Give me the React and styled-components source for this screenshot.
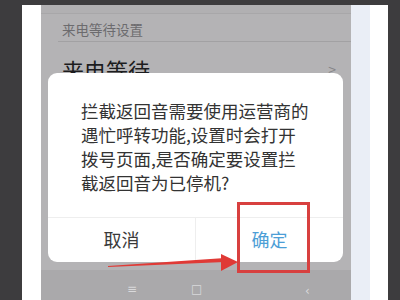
import React from 'react';
import styled, { createGlobalStyle } from 'styled-components';

const GlobalStyle = createGlobalStyle`
  html, body {
    margin: 0;
    padding: 0;
    background: #3d3c3e;
  }
  * {
    box-sizing: border-box;
  }
`;

const Frame = styled.div`
  width: 400px;
  height: 300px;
  display: flex;
  flex-direction: column;
  background: #3d3c3e;
  overflow: hidden;
  font-family: "Noto Sans CJK SC", "Noto Sans", sans-serif;
`;

const TopBand = styled.div`
  height: 5px;
  flex: none;
`;

const Row = styled.div`
  flex: 1;
  display: flex;
`;

const Strip = styled.div`
  width: ${(p) => p.w}px;
  flex: none;
  background: ${(p) => p.bg};
`;

const Phone = styled.div`
  position: relative;
  width: 310px;
  flex: none;
  display: flex;
  flex-direction: column;
  background: #b4b3b5;
`;

const StatusEdge = styled.div`
  height: 9px;
  border-bottom: 1px solid #a8a7a9;
  background: #b1b0b2;
`;

const SectionLabel = styled.div`
  padding: 7px 0 0 21px;
  height: 27px;
  font-size: 13.5px;
  line-height: 16px;
  color: #6c6b6e;
  margin-left: 0;
`;

const Divider = styled.div`
  margin-left: 17px;
  height: 1px;
  background: #a2a1a3;
`;

const Item = styled.div`
  position: relative;
  padding: 14px 0 0 21px;
  font-size: 22px;
  line-height: 26px;
  color: #1c1c1e;
`;

const Chevron = styled.span`
  position: absolute;
  right: 15px;
  top: 14px;
  font-size: 14px;
  color: #858487;
`;

const Spacer = styled.div`
  flex: 1;
`;

const NavBar = styled.div`
  height: 30px;
  display: flex;
  align-items: center;
  background: #aaa9ab;
  color: #d8d8da;
  font-size: 12px;
`;

const NavIcon = styled.span`
  position: absolute;
  left: ${(p) => p.x}px;
  bottom: ${(p) => p.b}px;
  line-height: 1;
  font-family: "DejaVu Sans", sans-serif;
  font-size: ${(p) => p.size}px;
  color: #d9d9db;
`;

const Dialog = styled.div`
  position: absolute;
  left: 7px;
  top: 68px;
  width: 295px;
  height: 189px;
  background: #ffffff;
  border-radius: 9px;
  display: flex;
  flex-direction: column;
`;

const Message = styled.div`
  padding: 26px 20px 0 33px;
  height: 145px;
  font-size: 17.5px;
  line-height: 24px;
  color: #333333;
  border-bottom: 1px solid #eeeeee;
`;

const Buttons = styled.div`
  flex: 1;
  display: flex;
`;

const Btn = styled.div`
  flex: 1;
  display: flex;
  align-items: center;
  justify-content: center;
  font-size: 18px;
  color: ${(p) => (p.primary ? '#4c9ed6' : '#3a3a3a')};
  border-left: ${(p) => (p.primary ? '1px solid #eeeeee' : 'none')};
  padding-bottom: 2px;
`;

const Highlight = styled.div`
  position: absolute;
  left: 196px;
  top: 197px;
  width: 73px;
  height: 71px;
  border: 3px solid #d8403f;
`;

const Arrow = styled.svg`
  position: absolute;
  left: 60px;
  top: 245px;
`;

export default function App() {
  return (
    <>
      <GlobalStyle />
      <Frame>
        <TopBand />
        <Row>
          <Strip w={22} bg="#3d3c3e" />
          <Strip w={19} bg="#ffffff" />
          <Phone>
            <StatusEdge />
            <SectionLabel>来电等待设置</SectionLabel>
            <Divider />
            <Item>
              来电等待
              <Chevron>&gt;</Chevron>
            </Item>
            <Spacer />
            <NavBar />
            <NavIcon x={86} b={5} size={12}>≡</NavIcon>
            <NavIcon x={150} b={5} size={12}>□</NavIcon>
            <NavIcon x={264} b={3} size={12}>‹</NavIcon>
            <Dialog>
              <Message>
                拦截返回音需要使用运营商的
                <br />
                遇忙呼转功能,设置时会打开
                <br />
                拨号页面,是否确定要设置拦
                <br />
                截返回音为已停机?
              </Message>
              <Buttons>
                <Btn>取消</Btn>
                <Btn primary>确定</Btn>
              </Buttons>
            </Dialog>
            <Highlight />
            <Arrow width="140" height="24" viewBox="0 0 140 24">
              <polygon points="7,16 124,8 124,12 7,17" fill="#e03a36" />
              <polygon points="120,4 137,12 120,21" fill="#e03a36" />
            </Arrow>
          </Phone>
          <Strip w={19} bg="#eaeef6" />
          <Strip w={18} bg="#ffffff" />
          <Strip w={12} bg="#3d3c3e" />
        </Row>
      </Frame>
    </>
  );
}
